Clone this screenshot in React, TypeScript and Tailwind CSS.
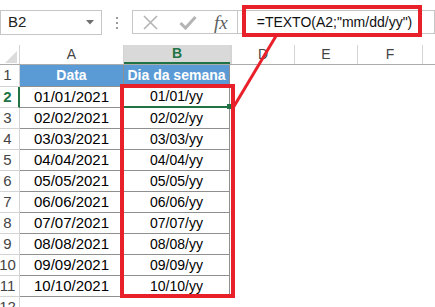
import React from "react";

const rows = [
  ["01/01/2021", "01/01/yy"],
  ["02/02/2021", "02/02/yy"],
  ["03/03/2021", "03/03/yy"],
  ["04/04/2021", "04/04/yy"],
  ["05/05/2021", "05/05/yy"],
  ["06/06/2021", "06/06/yy"],
  ["07/07/2021", "07/07/yy"],
  ["08/08/2021", "08/08/yy"],
  ["09/09/2021", "09/09/yy"],
  ["10/10/2021", "10/10/yy"],
];

export default function App() {
  return (
    <div
      className="relative h-[307px] w-[435px] overflow-hidden bg-white text-black"
      style={{ fontFamily: '"Liberation Sans", Arial, sans-serif' }}
    >
      {/* Toolbar */}
      <div className="flex h-[45px] items-start pt-[10px]">
        <div className="flex h-[25px] w-[102px] shrink-0 items-center justify-between border border-[#c6c6c6] pl-[7px] pr-[7px]">
          <span className="text-[15px] text-[#222]">B2</span>
          <svg width="8" height="5" viewBox="0 0 8 5">
            <path d="M0 0 L8 0 L4 4.5 Z" fill="#6f6f6f" />
          </svg>
        </div>
        <div className="flex w-[30px] shrink-0 flex-col items-center gap-[3px] pt-[7px]">
          <div className="h-[2px] w-[2px] bg-[#9a9a9a]" />
          <div className="h-[2px] w-[2px] bg-[#9a9a9a]" />
          <div className="h-[2px] w-[2px] bg-[#9a9a9a]" />
        </div>
        <div className="flex h-[24px] flex-1 items-center border border-[#c6c6c6]">
          <svg className="ml-[10px]" width="15" height="15" viewBox="0 0 15 15">
            <path d="M1 1 L14 14 M14 1 L1 14" stroke="#b4b4b4" strokeWidth="1.6" />
          </svg>
          <svg className="ml-[21px]" width="18" height="15" viewBox="0 0 18 15">
            <path d="M1.5 8 L6.5 13 L16.5 2" stroke="#b4b4b4" strokeWidth="3" fill="none" />
          </svg>
          <span
            className="ml-[17px] text-[19px] italic leading-none text-[#5f5f5f]"
            style={{ fontFamily: '"Liberation Serif", serif' }}
          >
            fx
          </span>
          <div className="ml-[9px] h-[22px] w-px bg-[#c6c6c6]" />
          <span className="ml-[19px] text-[14px] text-[#111]">=TEXTO(A2;"mm/dd/yy")</span>
        </div>
      </div>

      {/* Column header row */}
      <div className="flex h-[20px] border-b border-[#ababab] text-[14px] text-[#444]">
        <div className="relative w-[20px] shrink-0 border-r border-[#d4d4d4]">
          <svg className="absolute left-[5px] top-[6px]" width="12" height="12" viewBox="0 0 12 12">
            <path d="M12 0 L12 12 L0 12 Z" fill="#dcdcdc" />
          </svg>
        </div>
        <div className="flex w-[104px] shrink-0 items-center justify-center border-r border-[#d4d4d4]">A</div>
        <div className="flex w-[106px] shrink-0 items-center justify-center border-b-2 border-[#217346] bg-[#d9d9d9] font-bold text-[#217346]">
          B
        </div>
        <div className="w-[2px] shrink-0 border-x border-[#d4d4d4]" />
        <div className="flex w-[63px] shrink-0 items-center justify-center border-r border-[#d4d4d4]">D</div>
        <div className="flex w-[63px] shrink-0 items-center justify-center border-r border-[#d4d4d4]">E</div>
        <div className="flex w-[65px] shrink-0 items-center justify-center border-r border-[#d4d4d4]">F</div>
        <div className="flex-1" />
      </div>

      {/* Row 1 */}
      <div className="flex h-[22px]">
        <div className="flex w-[20px] shrink-0 items-center justify-center border-b border-r border-[#d4d4d4] pr-[4px] text-[15px] text-[#444]">
          1
        </div>
        <div className="flex w-[104px] shrink-0 items-center justify-center border-b border-r border-[#8f8f8f] bg-[#5b9bd5] text-[14px] font-bold text-white">
          Data
        </div>
        <div className="flex w-[106px] shrink-0 items-center justify-center border-b border-r border-[#8f8f8f] bg-[#5b9bd5] text-[14px] font-bold text-white">
          Dia da semana
        </div>
        <div className="flex-1" />
      </div>

      {/* Data rows */}
      {rows.map((r, i) => {
        const sel = i === 0;
        return (
          <div key={i} className="flex h-[21px]">
            <div
              className={
                sel
                  ? "flex w-[20px] shrink-0 items-center justify-center border-b border-r-2 border-b-[#d4d4d4] border-r-[#217346] pr-[3px] text-[15px] font-bold text-[#217346]"
                  : "flex w-[20px] shrink-0 items-center justify-center border-b border-r border-[#d4d4d4] pr-[4px] text-[15px] text-[#444]"
              }
            >
              {i + 2}
            </div>
            <div className="flex w-[104px] shrink-0 items-center justify-center border-b border-r border-[#8f8f8f] text-[15px]">
              {r[0]}
            </div>
            <div
              className={
                sel
                  ? "relative flex w-[106px] shrink-0 items-center justify-center border-b-2 border-r border-b-[#217346] border-r-[#8f8f8f] text-[14px]"
                  : "flex w-[106px] shrink-0 items-center justify-center border-b border-r border-[#8f8f8f] text-[14px]"
              }
            >
              {r[1]}
              {sel && <div className="absolute bottom-[-3px] right-[-3px] h-[5px] w-[5px] bg-[#217346]" />}
            </div>
            <div className="flex-1" />
          </div>
        );
      })}

      {/* Row 12 partial */}
      <div className="flex h-[21px]">
        <div className="flex w-[20px] shrink-0 items-center justify-center border-r border-[#d4d4d4] pr-[4px] text-[15px] text-[#444]">
          12
        </div>
      </div>

      {/* Annotations */}
      <div className="absolute left-[242px] top-[5px] h-[32px] w-[180px] border-4 border-[#e8202a]" />
      <div className="absolute left-[120px] top-[84px] h-[214px] w-[115px] border-4 border-[#e8202a]" />
      <svg className="pointer-events-none absolute left-0 top-0" width="435" height="307">
        <line x1="276" y1="36" x2="233" y2="108" stroke="#e8202a" strokeWidth="3" />
      </svg>
    </div>
  );
}
